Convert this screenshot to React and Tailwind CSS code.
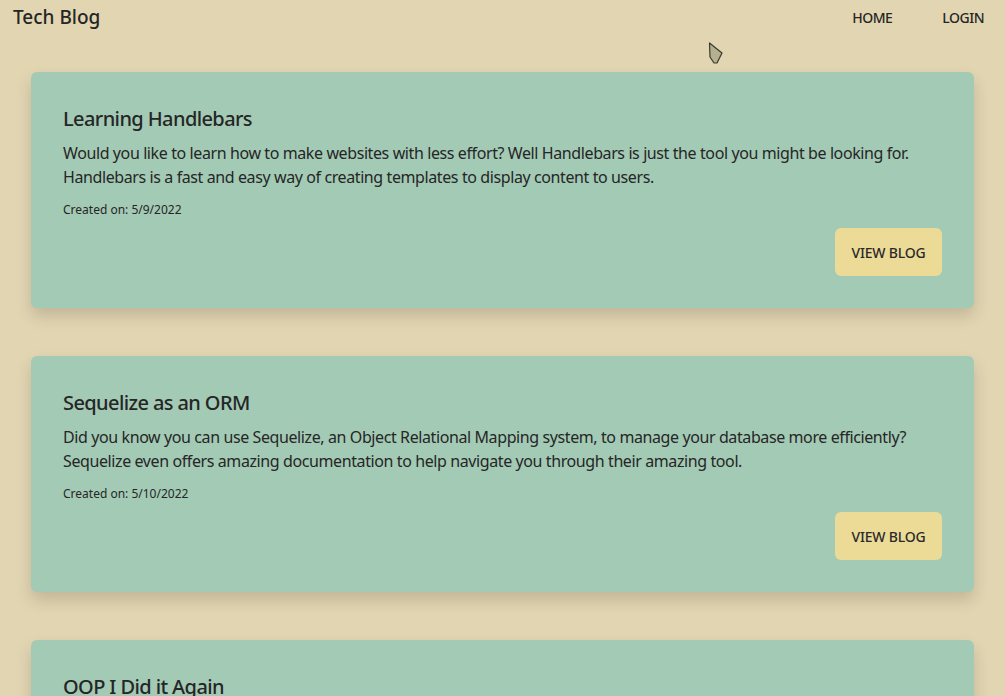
const posts = [
  {
    title: "Learning Handlebars",
    body: "Would you like to learn how to make websites with less effort? Well Handlebars is just the tool you might be looking for. Handlebars is a fast and easy way of creating templates to display content to users.",
    date: "5/9/2022",
  },
  {
    title: "Sequelize as an ORM",
    body: "Did you know you can use Sequelize, an Object Relational Mapping system, to manage your database more efficiently? Sequelize even offers amazing documentation to help navigate you through their amazing tool.",
    date: "5/10/2022",
  },
  {
    title: "OOP I Did it Again",
    body: "Object oriented programming is a way of organizing your code around objects and the data they hold, rather than functions and logic alone.",
    date: "5/11/2022",
  },
];

const PostCard = ({ post }) => (
  <div className="bg-[#a3cab5] rounded-md p-8 shadow-[0_8px_16px_rgba(0,0,0,0.15)] flex flex-col">
    <h2 className="text-[20px] leading-[30px] font-medium tracking-[-0.6px]">{post.title}</h2>
    <p className="mt-[7px] text-[16px] leading-[24px] tracking-[-0.4px]">{post.body}</p>
    <p className="mt-[12px] text-[12px] leading-[18px]">Created on: {post.date}</p>
    <div className="flex justify-end mt-[9px]">
      <button className="bg-[#ecda97] rounded-md h-12 w-[107px] text-[14px] font-medium tracking-[-0.2px] text-[#2a2a2a]">
        VIEW BLOG
      </button>
    </div>
  </div>
);

export default function App() {
  return (
    <div
      className="min-h-screen bg-[#e2d5b2] text-[#262626] relative"
      style={{ fontFamily: '"Noto Sans", "Open Sans", sans-serif' }}
    >
      <header className="flex items-center justify-between h-[34px] pl-[13px] pr-[21px]">
        <h1 className="text-[19px] font-medium">Tech Blog</h1>
        <nav className="flex gap-[50px] text-[14px] font-medium tracking-[-0.5px]">
          <a href="#">HOME</a>
          <a href="#">LOGIN</a>
        </nav>
      </header>

      <main className="flex flex-col gap-12 pl-[31px] pr-[31px] pt-[38px] pb-12">
        {posts.map((post) => (
          <PostCard key={post.title} post={post} />
        ))}
      </main>

      {/* mouse cursor seen in the shot */}
      <svg className="absolute left-[708px] top-[42px]" width="16" height="22" viewBox="0 0 16 22">
        <path d="M1.5 1 L2 15 L6 21 L9 21 L14 11 Z" fill="#b4b190" stroke="#3b3a30" strokeWidth="1.2" strokeLinejoin="round" />
      </svg>
    </div>
  );
}
